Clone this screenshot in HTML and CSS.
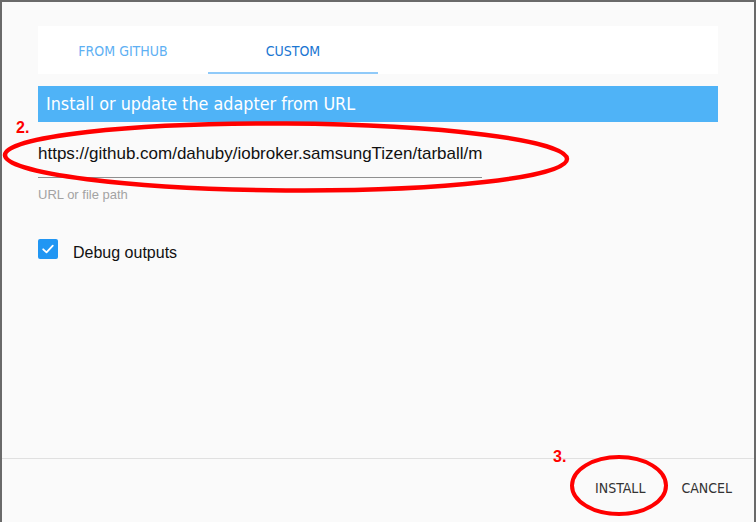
FILE: index.html
```html
<!DOCTYPE html>
<html>
<head>
<meta charset="utf-8">
<link rel="stylesheet" href="styles.css">
</head>
<body>
<div class="dialog">
  <div class="content">
    <div class="tabs">
      <div class="tab">FROM GITHUB</div>
      <div class="tab active">CUSTOM</div>
    </div>
    <div class="header">Install or update the adapter from URL</div>
    <div class="field">
      <div class="input">https://github.com/dahuby/iobroker.samsungTizen/tarball/m</div>
      <div class="helper">URL or file path</div>
    </div>
    <label class="check">
      <span class="box"><svg width="14" height="14" viewBox="0 0 14 14"><path d="M2.2 7.3 L5.5 10.4 L11.8 3.6" fill="none" stroke="#fff" stroke-width="1.8" stroke-linecap="round" stroke-linejoin="round"/></svg></span>
      <span class="check-label">Debug outputs</span>
    </label>
  </div>
  <div class="footer">
    <div class="btn">INSTALL</div>
    <div class="btn">CANCEL</div>
  </div>
</div>
<svg class="marks" width="756" height="522" viewBox="0 0 756 522">
  <ellipse cx="286" cy="157" rx="281" ry="33.5" fill="none" stroke="#f00" stroke-width="4.5" transform="rotate(0.4 286 157)"/>
  <ellipse cx="619" cy="485.5" rx="47" ry="28.5" fill="none" stroke="#f00" stroke-width="4"/>
</svg>
<div class="num n2">2.</div>
<div class="num n3">3.</div>
</body>
</html>
```
FILE: styles.css
```css
html, body {
  margin: 0;
  padding: 0;
}
body {
  background: #6a6a6a;
  width: 756px;
  height: 522px;
  overflow: hidden;
  position: relative;
  font-family: "Liberation Sans", Arial, sans-serif;
}
.dialog {
  margin: 2px 2px 0 2px;
  height: 520px;
  background: #fafafa;
  display: flex;
  flex-direction: column;
}
.content {
  flex: 1;
  padding: 24px 36px 0 36px;
  display: flex;
  flex-direction: column;
}
.tabs {
  height: 48px;
  background: #fff;
  display: flex;
}
.tab {
  width: 170px;
  display: flex;
  align-items: center;
  justify-content: center;
  font-family: "DejaVu Sans Condensed", "DejaVu Sans", sans-serif;
  font-stretch: condensed;
  font-size: 14px;
  color: #5eb0f3;
  box-sizing: border-box;
  padding-top: 1px;
}
.tab.active {
  color: #1a76d2;
  border-bottom: 2px solid #90caf9;
  padding-top: 3px;
}
.header {
  margin-top: 12px;
  height: 36px;
  background: #4fb3f7;
  color: #fff;
  font-family: "DejaVu Sans Condensed", "DejaVu Sans", sans-serif;
  font-stretch: condensed;
  font-size: 17.8px;
  line-height: 36px;
  padding-left: 8px;
}
.field {
  margin-top: 20px;
  width: 444px;
}
.input {
  font-size: 17px;
  color: #111;
  line-height: 20px;
  padding: 2px 0 13px 0;
  border-bottom: 1px solid #8f8f8f;
  white-space: nowrap;
  overflow: hidden;
}
.helper {
  margin-top: 9px;
  font-size: 13px;
  color: #a3a3a3;
}
.check {
  margin-top: 33px;
  display: flex;
  align-items: center;
}
.box {
  width: 20px;
  height: 20px;
  border-radius: 2px;
  background: #2196f3;
  display: flex;
  align-items: center;
  justify-content: center;
}
.check-label {
  margin-left: 15px;
  font-size: 16px;
  color: #111;
  padding-top: 9px;
}
.footer {
  height: 63px;
  border-top: 1px solid #e0e0e0;
  display: flex;
  justify-content: flex-end;
  align-items: center;
  padding-right: 22px;
  gap: 36px;
  padding-bottom: 6px;
  box-sizing: border-box;
  height: 64px;
}
.btn {
  font-family: "DejaVu Sans Condensed", "DejaVu Sans", sans-serif;
  font-stretch: condensed;
  font-size: 14px;
  color: #333;
}
.marks {
  position: absolute;
  left: 0;
  top: 0;
  pointer-events: none;
}
.num {
  position: absolute;
  color: #f00;
  font-weight: bold;
  font-size: 16px;
  font-family: "Liberation Sans", Arial, sans-serif;
}
.n2 { left: 16px; top: 119px; }
.n3 { left: 553px; top: 448px; }
```
